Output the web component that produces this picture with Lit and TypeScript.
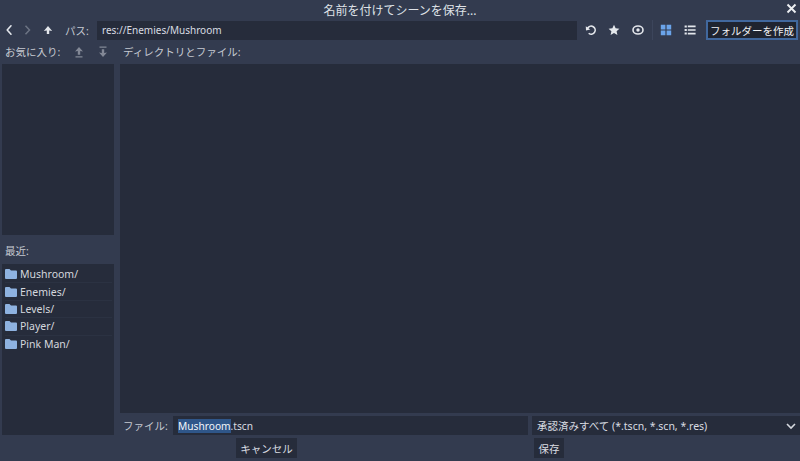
import { LitElement, html, svg, css } from "lit";
import { customElement } from "lit/decorators.js";

const folder = html`<svg class="folder" viewBox="0 0 12 10"><path d="M0 1 Q0 0 1 0 H4.5 L6 1.5 H11 Q12 1.5 12 2.5 V9 Q12 10 11 10 H1 Q0 10 0 9 Z" fill="#8eb2e0"/></svg>`;

@customElement("app-root")
export class AppRoot extends LitElement {
  static styles = css`
    :host {
      display: flex;
      flex-direction: column;
      width: 800px;
      height: 461px;
      background: #333b4f;
      color: #d9dce2;
      font-family: "Noto Sans", "Noto Sans CJK JP", sans-serif;
      font-size: 10.5px;
      overflow: hidden;
      box-sizing: border-box;
      padding: 0 2px;
    }
    .title {
      position: relative;
      height: 19px;
      display: flex;
      align-items: center;
      justify-content: center;
      font-size: 12px;
      color: #dfe2e7;
    }
    .close { position: absolute; right: 1px; top: 3px; width: 11px; height: 11px; }
    .toolbar { height: 22px; display: flex; align-items: center; }
    .ic { width: 12px; height: 12px; flex: none; display: block; }
    .st { fill: none; stroke: #e4e7ec; stroke-width: 1.6; stroke-linecap: round; stroke-linejoin: round; }
    .dim { fill: none; stroke: #6d7484; stroke-width: 1.5; }
    .x { fill: none; stroke: #eef0f3; stroke-width: 1.9; }
    .chev { fill: none; stroke: #d5d8de; stroke-width: 1.6; }
    .fl { fill: #e4e7ec; }
    .bl { fill: #6ba4ea; }
    .back { margin-left: 1px; }
    .fwd { margin-left: 7px; }
    .up { margin-left: 8px; }
    .pathlabel { margin-left: 11px; width: 32px; color: #c6cad2; white-space: nowrap; }
    .field {
      background: #262c3b;
      display: flex;
      align-items: center;
      box-sizing: border-box;
      padding-left: 5px;
    }
    .path { width: 480px; height: 19px; font-size: 10px; }
    .reload { margin-left: 8px; }
    .star { margin-left: 11px; }
    .eye { margin-left: 12px; }
    .sep { width: 1px; height: 20px; background: #3c455b; margin-left: 8px; }
    .grid { margin-left: 7px; }
    .list { margin-left: 12px; }
    .mk {
      margin-left: 10px;
      width: 92px;
      height: 20px;
      box-sizing: border-box;
      border: 2px solid #41689e;
      background: #1f2430;
      color: #f0f2f5;
      display: flex;
      align-items: center;
      justify-content: center;
      white-space: nowrap;
      font-size: 10.5px;
    }
    .body {
      display: flex;
      gap: 6px;
      height: 394px;
    }
    .left { width: 112px; flex: none; display: flex; flex-direction: column; }
    .right { flex: 1; display: flex; flex-direction: column; }
    .lab { height: 23px; display: flex; align-items: center; color: #c6cad2; padding: 0 0 2px 3px; box-sizing: border-box; flex: none; }
    .lab .ic { opacity: 0.45; }
    .favup { margin-left: 13px; }
    .favdn { margin-left: 12px; }
    .panel { background: #262c3b; flex: 1; }
    .fav { flex: none; height: 171px; }
    .reclab { height: 29px; padding: 2px 0 0 3px; }
    .rec { flex: none; height: 171px; padding: 2px 2px 0 3px; box-sizing: border-box; }
    .row {
      height: 17.4px;
      display: flex;
      align-items: center;
      gap: 3px;
      border-bottom: 1px solid #2b3242;
      box-sizing: border-box;
      color: #d4d7dd;
    }
    .row:last-child { border-bottom: 0; }
    .folder { width: 12px; height: 10px; flex: none; }
    .main { flex: none; height: 349px; }
    .filerow { display: flex; height: 19px; margin-top: 3px; align-items: center; }
    .filelab { width: 53px; padding-left: 3px; box-sizing: border-box; color: #c6cad2; }
    .name { width: 355px; height: 19px; color: #d9dce2; font-size: 10.2px; }
    .sel { background: #2f5689; color: #f2f5fa; }
    .filter { width: 270px; height: 19px; margin-left: 4px; justify-content: space-between; padding-right: 5px; }
    .btns { display: flex; height: 20px; margin-top: 3px; }
    .btn {
      background: #262c3b;
      height: 20px;
      display: flex;
      align-items: center;
      justify-content: center;
      box-sizing: border-box;
    }
    .cancel { width: 61px; margin-left: 234px; }
    .save { width: 30px; margin-left: 237px; }
  `;

  render() {
    const icon = (cls: string, body: unknown) =>
      html`<svg class="ic ${cls}" viewBox="0 0 12 12">${body}</svg>`;
    return html`
      <div class="title">
        <span>名前を付けてシーンを保存...</span>
        <svg class="close" viewBox="0 0 11 11"><path class="x" d="M1.5 1.5 L9.5 9.5 M9.5 1.5 L1.5 9.5"/></svg>
      </div>
      <div class="toolbar">
        ${icon("back", svg`<path class="st" d="M8 1.8 L4.2 6 L8 10.2"/>`)}
        ${icon("fwd", svg`<path class="dim" d="M3.5 1.8 L7.5 6 L3.5 10.2"/>`)}
        ${icon("up", svg`<path class="fl" d="M6 2 L10.2 7 L7.2 6.4 V10 H4.8 V6.4 L1.8 7 Z"/>`)}
        <span class="pathlabel">パス:</span>
        <div class="field path">res://Enemies/Mushroom</div>
        ${icon("reload", svg`<path class="st" d="M2.8 4 A4 4 0 1 1 4.2 9.6"/><path class="fl" d="M0.8 2.2 L1 6.4 L5.2 5.6 Z"/>`)}
        ${icon("star", svg`<path class="fl" d="M6 0.8 L7.6 4.2 L11.4 4.7 L8.6 7.2 L9.4 11 L6 9.1 L2.6 11 L3.4 7.2 L0.6 4.7 L4.4 4.2 Z"/>`)}
        ${icon("eye", svg`<ellipse class="st" cx="6" cy="6" rx="5" ry="4"/><circle class="fl" cx="6" cy="6" r="1.7"/>`)}
        <div class="sep"></div>
        ${icon("grid", svg`<path class="bl" d="M0.8 0.8 H5.4 V5.4 H0.8 Z M6.6 0.8 H11.2 V5.4 H6.6 Z M0.8 6.6 H5.4 V11.2 H0.8 Z M6.6 6.6 H11.2 V11.2 H6.6 Z"/>`)}
        ${icon("list", svg`<path class="fl" d="M0.6 1.4 H2.8 V3.4 H0.6 Z M0.6 5 H2.8 V7 H0.6 Z M0.6 8.6 H2.8 V10.6 H0.6 Z M3.8 1.6 H11.6 V3.2 H3.8 Z M3.8 5.2 H11.6 V6.8 H3.8 Z M3.8 8.8 H11.6 V10.4 H3.8 Z"/>`)}
        <div class="mk">フォルダーを作成</div>
      </div>
      <div class="body">
        <div class="left">
          <div class="lab">
            <span>お気に入り:</span>
            ${icon("favup", svg`<path class="fl" d="M6 1 L10 5.5 L7.2 5 V8.8 H4.8 V5 L2 5.5 Z M2.5 10.2 H9.5 V11.4 H2.5 Z"/>`)}
            ${icon("favdn", svg`<path class="fl" d="M6 11 L10 6.5 L7.2 7 V3.2 H4.8 V7 L2 6.5 Z M2.5 0.6 H9.5 V1.8 H2.5 Z"/>`)}
          </div>
          <div class="panel fav"></div>
          <div class="lab reclab">最近:</div>
          <div class="panel rec">
            ${["Mushroom/", "Enemies/", "Levels/", "Player/", "Pink Man/"].map(
              (t) => html`<div class="row">${folder}<span>${t}</span></div>`
            )}
          </div>
        </div>
        <div class="right">
          <div class="lab">ディレクトリとファイル:</div>
          <div class="panel main"></div>
          <div class="filerow">
            <div class="filelab">ファイル:</div>
            <div class="field name"><span class="sel">Mushroom</span><span>.tscn</span></div>
            <div class="field filter">
              <span>承認済みすべて (*.tscn, *.scn, *.res)</span>
              <svg class="ic" viewBox="0 0 12 12"><path class="chev" d="M2 4 L6 8 L10 4"/></svg>
            </div>
          </div>
        </div>
      </div>
      <div class="btns">
        <div class="btn cancel">キャンセル</div>
        <div class="btn save">保存</div>
      </div>
    `;
  }
}
